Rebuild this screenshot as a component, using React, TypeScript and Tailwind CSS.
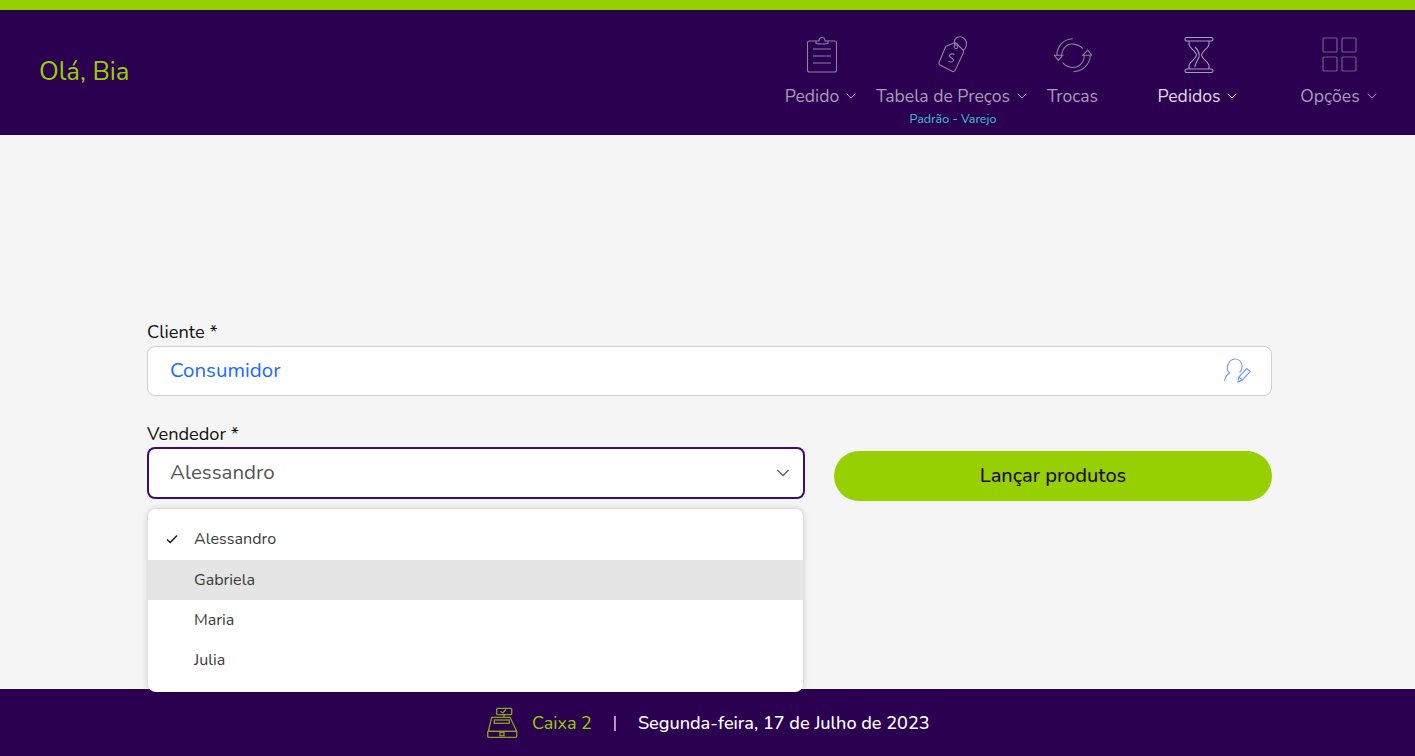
import React from 'react';

const Chevron = ({ className = '' }: { className?: string }) => (
  <svg width="10" height="6" viewBox="0 0 10 6" fill="none" stroke="currentColor" strokeWidth="1" className={className}>
    <path d="M1 1l4 4 4-4" strokeLinecap="round" strokeLinejoin="round" />
  </svg>
);

const iconStroke = 'stroke-[#8f7fa3]';

const ClipboardIcon = () => (
  <svg width="32" height="38" viewBox="0 0 32 38" fill="none" strokeWidth="1.1" className={iconStroke}>
    <path d="M10 5H3.500Q1.500 5 1.500 7v27q0 2 2 2h25q2 0 2-2V7q0-2-2-2H22" />
    <path d="M10 7.500V5h3q0-3.500 3-3.500T19 5h3v2.500Q16 8.500 10 7.500z" />
    <path d="M7 13h18M7 20h18M7 27h18" />
  </svg>
);

const TagIcon = () => (
  <svg width="30" height="38" viewBox="0 0 30 38" fill="none" strokeWidth="1.1" className={iconStroke}>
    <path d="M8.500 10L16 7q1.500-.5 2.500.5L25 14q1 1 .5 2.500L17 34.500q-1 1.500-2.500 1L2 29q-1.500-1-1-2.500L7.500 11q.4-.8 1-1z" />
    <circle cx="18" cy="10.700" r="1.800" />
    <path d="M17 9C15 4 18 .8 22 .8c4 0 7 4 6.500 8-.3 2.500-1.500 4.500-3.500 6" />
    <path d="M16.500 18.500c-2-1.200-4.500-.7-5 1-.5 2.200 4.500 2.700 4 5-.4 1.700-3 2-5 .8" />
  </svg>
);

const SwapIcon = () => (
  <svg width="38" height="35" viewBox="0 0 38 35" fill="none" strokeWidth="1.1" className={iconStroke}>
    <path d="M18.700.7C9.500 1 3.300 8 2.700 17.300" />
    <path d="M28.700 10.700C24.500 5.500 14 3.500 9.500 11c-1.200 2-1.800 4-1.800 6.300" />
    <path d="M.3 17.300h2.400M7.700 17.300h1L4.300 22.300.3 17.300z" />
    <path d="M19.300 33.700c9-.3 16.300-6.700 17-15.700" />
    <path d="M8.700 24.700c4 5 12 6.500 17 2.500 3-2.500 4.600-6 4.600-9.900" />
    <path d="M37.700 17.300h-1.400M30.300 17.300h-1.600L33.700 12l4 5.300z" />
  </svg>
);

const HourglassIcon = () => (
  <svg width="30" height="38" viewBox="0 0 30 38" fill="none" strokeWidth="1.100" className="stroke-[#a99bbb]">
    <rect x="1" y="1.500" width="28" height="3.500" rx="1.700" />
    <rect x="1" y="33" width="28" height="3.500" rx="1.700" />
    <path d="M5 5v3c0 4 7 7 7.500 11C12 23 5 26 5 30v3" />
    <path d="M25 5v3c0 4-7 7-7.500 11 .5 4 7.500 7 7.500 11v3" />
    <path d="M11 11c3 3 5 6 4 10-1 3-4 6-4 10" />
  </svg>
);

const GridIcon = () => (
  <svg width="36" height="36" viewBox="0 0 36 36" fill="none" strokeWidth="1.200" className="stroke-[#6f5c88]">
    <rect x="1" y="1" width="14" height="14" rx="1" />
    <rect x="20" y="1" width="14" height="14" rx="1" />
    <rect x="1" y="20" width="14" height="14" rx="1" />
    <rect x="20" y="20" width="14" height="14" rx="1" />
  </svg>
);

const RegisterIcon = () => (
  <svg width="31" height="31" viewBox="0 0 31 31" fill="none" stroke="#8aa51c" strokeWidth="1.300">
    <rect x="9.700" y="1.300" width="15" height="6.400" rx="1" />
    <path d="M13.500 4.500l2.500 1.500 3-3.500" />
    <path d="M17 7.700v2.600M4.700 10.300H23l6.700 14H1.300l3.400-14z" />
    <rect x="7.300" y="13" width="15" height="3.300" />
    <rect x=".7" y="24.300" width="29" height="6" rx="1" />
    <rect x="13" y="25.300" width="4" height="3.400" />
  </svg>
);

const EditUserIcon = () => (
  <svg width="28" height="26" viewBox="0 0 28 26" fill="none" stroke="#6f9dfb" strokeWidth="1.100">
    <path d="M1.500 23c.5-4 2.500-6.500 5-8-2-2-2.500-5-1.800-7.500C6 3.500 9 1 12 1c3.500 0 6.500 2.500 7 6 .4 3-.5 5.500-2.500 7.500" />
    <path d="M15 24l.8-5 8-8.500 3.500 3-8 8.500-4.300 2z" />
    <path d="M15.800 19l3.500 3" />
  </svg>
);

const navItems = [
  { label: 'Pedido', width: 'w-[116px]', icon: <ClipboardIcon />, arrow: true, text: 'text-[#a99bbb]' },
  { label: 'Tabela de Preços', width: 'w-[146px]', icon: <TagIcon />, arrow: true, text: 'text-[#a99bbb]', sub: 'Padrão - Varejo' },
  { label: 'Trocas', width: 'w-[94px]', icon: <SwapIcon />, arrow: false, text: 'text-[#a99bbb]' },
  { label: 'Pedidos', width: 'w-[158px]', icon: <HourglassIcon />, arrow: true, text: 'text-[#e0dae8]' },
  { label: 'Opções', width: 'w-[124px]', icon: <GridIcon />, arrow: true, text: 'text-[#a99bbb]' },
];

const sellers = ['Alessandro', 'Gabriela', 'Maria', 'Julia'];

export default function App() {
  return (
    <div className="flex h-[756px] flex-col overflow-hidden bg-[#f5f5f5] font-['Nunito','Noto_Sans',sans-serif]">
      <div className="h-[10px] bg-[#97d000]" />

      <header className="flex h-[125px] items-start justify-between bg-[#2b0050] pr-[14px] pl-[39px]">
        <span className="mt-[45px] text-[25.700px] leading-[34px] text-[#97d000]">Olá, Bia</span>
        <nav className="flex">
          {navItems.map((item) => (
            <div key={item.label} className={`${item.width} flex flex-col items-center pt-[25px]`}>
              <div className="ml-[1px] flex h-[40px] items-center justify-center">{item.icon}</div>
              <div className={`mt-[9px] ${item.arrow ? '-ml-[1px]' : 'ml-[1px]'} flex items-center gap-[7px] whitespace-nowrap text-[17.600px] leading-[24px] ${item.text}`}>
                <span>{item.label}</span>
                {item.arrow && <Chevron />}
              </div>
              {item.sub && <span className="mt-[3px] ml-[2px] text-[12.500px] leading-[16px] whitespace-nowrap text-[#3fc5d0]">{item.sub}</span>}
            </div>
          ))}
        </nav>
      </header>

      <main className="relative flex-1 pt-[186px] pr-[143px] pl-[147px]">
        <label className="block text-[18.200px] leading-[23px] text-[#111111]">Cliente *</label>
        <div className="mt-[2px] flex h-[50px] items-center justify-between rounded-lg border border-[#cfcfcf] bg-white pr-[20px] pl-[22px]">
          <span className="pb-[2px] text-[20.500px] text-[#2269ff]">Consumidor</span>
          <EditUserIcon />
        </div>

        <div className="mt-[27px] flex gap-[29px]">
          <div className="relative w-[658px]">
            <label className="block text-[18.200px] leading-[23px] text-[#111111]">Vendedor *</label>
            <div className="mt-[1px] flex h-[52px] items-center justify-between rounded-lg border-2 border-[#3d0a78] bg-white pr-[13px] pl-[21px]">
              <span className="pb-[2px] text-[20.500px] text-[#555555]">Alessandro</span>
              <Chevron className="h-[8px] w-[14px] text-[#666666]" />
            </div>
            <ul className="absolute top-[86px] right-[2px] left-[1px] z-10 h-[183px] rounded-lg bg-white pt-[11px] shadow-[0_0_6px_rgba(0,0,0,0.2)]">
              {sellers.map((seller, index) => (
                <li
                  key={seller}
                  className={`flex h-[40px] items-center text-[16.100px] text-[#3a3a3a] ${index === 1 ? 'bg-[#e5e5e5]' : ''} ${index === 0 ? 'pb-[2px]' : ''}`}
                >
                  <span className="flex w-[46px] justify-center pl-[2px]">
                    {index === 0 && (
                      <svg width="12" height="10" viewBox="0 0 12 10" fill="none" stroke="#111111" strokeWidth="1.300">
                        <path d="M1 5.500L4.200 8.500 11 1.500" />
                      </svg>
                    )}
                  </span>
                  {seller}
                </li>
              ))}
            </ul>
          </div>
          <button className="mt-[28px] h-[50px] w-[438px] rounded-full bg-[#97d000] text-[20px] font-medium text-[#1f0a33]">
            Lançar produtos
          </button>
        </div>
      </main>

      <footer className="flex h-[67px] items-center bg-[#2b0050] pl-[487px] text-[18px]">
        <RegisterIcon />
        <span className="mt-[2px] ml-[14px] text-[#97d000]">Caixa 2</span>
        <span className="mt-[2px] mr-[22px] ml-[22px] h-[15px] w-[2px] bg-gradient-to-r from-[#4fc3f7] to-[#ff4f9a]" />
        <span className="mt-[2px] text-[18.100px] font-medium text-white">Segunda-feira, 17 de Julho de 2023</span>
      </footer>
    </div>
  );
}
